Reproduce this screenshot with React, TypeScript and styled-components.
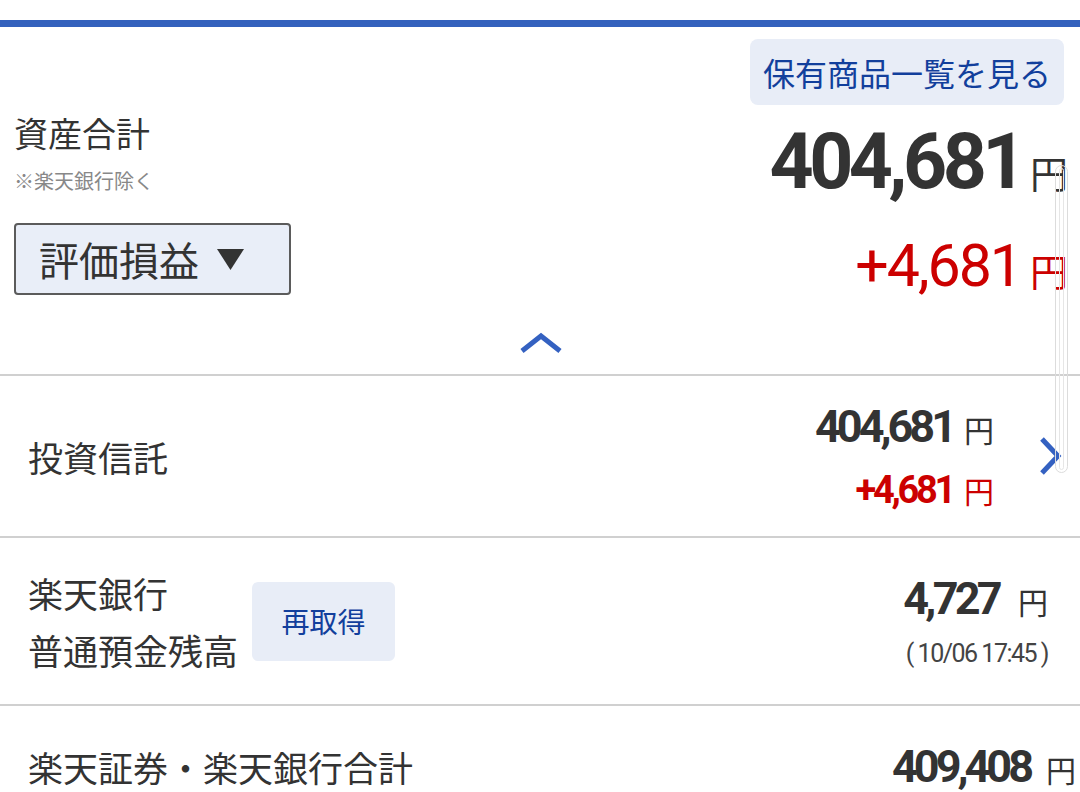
import React from "react";
import styled, { createGlobalStyle } from "styled-components";

const GlobalStyle = createGlobalStyle`
  html, body {
    margin: 0;
    padding: 0;
    background: #fff;
  }
  body {
    font-family: "Noto Sans CJK JP", "Noto Sans", sans-serif;
    color: #333;
  }
`;

const BLUE = "#3461bd";
const LINE = "#d0d0d0";

const Page = styled.div`
  position: relative;
  width: 1080px;
  height: 792px;
  overflow: hidden;
  padding-top: 20px;
  box-sizing: border-box;
`;

const TabLine = styled.div`
  height: 7px;
  background: ${BLUE};
`;

const Summary = styled.section`
  padding: 0 12px 0 14px;
  border-bottom: 2px solid ${LINE};
`;

const SummaryTop = styled.div`
  display: flex;
  justify-content: flex-end;
  padding: 12px 4px 0 0;
`;

const SoftButton = styled.button<{ $w: number; $h: number; $size: number }>`
  width: ${(p) => p.$w}px;
  height: ${(p) => p.$h}px;
  flex: none;
  border: 0;
  border-radius: 8px;
  background: #e8edf7;
  color: #123f9c;
  font-family: inherit;
  font-size: ${(p) => p.$size}px;
  line-height: 1;
  padding: 0;
`;

const SummaryGrid = styled.div`
  display: grid;
  grid-template-columns: 1fr auto;
`;

const TotalLabel = styled.div`
  padding-top: 11px;
`;

const Title = styled.div`
  font-size: 34px;
  line-height: 1;
`;

const Note = styled.div`
  margin-top: 21px;
  font-size: 20px;
  line-height: 1;
  color: #888;
`;

const Amount = styled.div<{ $top: number; $gap: number }>`
  display: flex;
  align-items: baseline;
  justify-content: flex-end;
  gap: ${(p) => p.$gap}px;
  padding-top: ${(p) => p.$top}px;
  line-height: 1;
`;

const Num = styled.span<{ $size: number; $bold?: boolean; $red?: boolean; $ls?: number }>`
  font-family: Roboto, "Noto Sans CJK JP", sans-serif;
  font-size: ${(p) => p.$size}px;
  font-weight: ${(p) => (p.$bold ? 700 : 400)};
  color: ${(p) => (p.$red ? "#cc0000" : "#333")};
  letter-spacing: ${(p) => p.$ls ?? 0}px;
`;

const Yen = styled.span<{ $size: number; $red?: boolean }>`
  font-size: ${(p) => p.$size}px;
  color: ${(p) => (p.$red ? "#cc0000" : "#333")};
`;

const Select = styled.div`
  margin-top: 22px;
  width: 277px;
  height: 72px;
  box-sizing: border-box;
  border: 2px solid #5b5b5b;
  border-radius: 4px;
  background: #e9eef8;
  display: flex;
  align-items: center;
  gap: 18px;
  padding-left: 23px;
  font-size: 40px;
  line-height: 1;
`;

const Toggle = styled.div`
  display: flex;
  justify-content: center;
  padding: 37px 0 20px;
`;

const Row = styled.div<{ $h: number; $pr: number }>`
  display: flex;
  align-items: center;
  height: ${(p) => p.$h}px;
  padding: 0 ${(p) => p.$pr}px 0 28px;
  border-bottom: 2px solid ${LINE};
`;

const RowLabel = styled.div`
  font-size: 35px;
  line-height: 57px;
`;

const Values = styled.div`
  margin-left: auto;
  display: flex;
  flex-direction: column;
  align-items: flex-end;
`;

const Stamp = styled.div`
  margin-top: 20px;
  font-family: Roboto, sans-serif;
  font-size: 25px;
  line-height: 1;
  color: #444;
  letter-spacing: -1.5px;
`;

const ChevronRight = styled.svg`
  margin-left: 44px;
  flex: none;
`;

const Scrollbar = styled.div`
  position: absolute;
  left: 1055px;
  top: 165px;
  width: 13px;
  height: 308px;
  box-sizing: border-box;
  border: 1px solid #dcdcdc;
  border-radius: 7px;
  &::after {
    content: "";
    position: absolute;
    inset: 2px 3px;
    border: 1px solid #e6e6e6;
    border-radius: 4px;
  }
`;

export default function App() {
  return (
    <Page>
      <GlobalStyle />
      <TabLine />
      <Summary>
        <SummaryTop>
          <SoftButton $w={314} $h={66} $size={32}>保有商品一覧を見る</SoftButton>
        </SummaryTop>
        <SummaryGrid>
          <TotalLabel>
            <Title>資産合計</Title>
            <Note>※楽天銀行除く</Note>
          </TotalLabel>
          <Amount $top={19} $gap={8}>
            <Num $size={77} $bold $ls={-4.5}>404,681</Num>
            <Yen $size={38}>円</Yen>
          </Amount>
          <Select>
            評価損益
            <svg width="27" height="21" viewBox="0 0 27 21">
              <polygon points="0,0 27,0 13.5,21" fill="#333" />
            </svg>
          </Select>
          <Amount $top={35} $gap={9}>
            <Num $size={59} $red $ls={-2}>+4,681</Num>
            <Yen $size={38} $red>円</Yen>
          </Amount>
        </SummaryGrid>
        <Toggle>
          <svg width="44" height="22" viewBox="0 0 44 22">
            <polyline points="3,19 22,4 41,19" fill="none" stroke="#3461c1" strokeWidth="5" />
          </svg>
        </Toggle>
      </Summary>

      <Row $h={160} $pr={18}>
        <RowLabel>投資信託</RowLabel>
        <Values>
          <Amount $top={0} $gap={11}>
            <Num $size={45} $bold $ls={-4}>404,681</Num>
            <Yen $size={30}>円</Yen>
          </Amount>
          <Amount $top={22} $gap={11}>
            <Num $size={38} $bold $red $ls={-3.3}>+4,681</Num>
            <Yen $size={30} $red>円</Yen>
          </Amount>
        </Values>
        <ChevronRight width="24" height="40" viewBox="0 0 24 40">
          <polyline points="4,3 20,20 4,37" fill="none" stroke="#3461c1" strokeWidth="5" />
        </ChevronRight>
      </Row>

      <Row $h={166} $pr={32}>
        <RowLabel>
          楽天銀行
          <br />
          普通預金残高
        </RowLabel>
        <SoftButton $w={143} $h={79} $size={28} style={{ marginLeft: 14, borderRadius: 6 }}>
          再取得
        </SoftButton>
        <Values>
          <Amount $top={0} $gap={19}>
            <Num $size={45} $bold $ls={-3.7}>4,727</Num>
            <Yen $size={30}>円</Yen>
          </Amount>
          <Stamp>( 10/06 17:45 )</Stamp>
        </Values>
      </Row>

      <Row $h={120} $pr={4}>
        <RowLabel>楽天証券・楽天銀行合計</RowLabel>
        <Values>
          <Amount $top={0} $gap={16}>
            <Num $size={45} $bold $ls={-4}>409,408</Num>
            <Yen $size={30}>円</Yen>
          </Amount>
        </Values>
      </Row>

      <Scrollbar />
    </Page>
  );
}
